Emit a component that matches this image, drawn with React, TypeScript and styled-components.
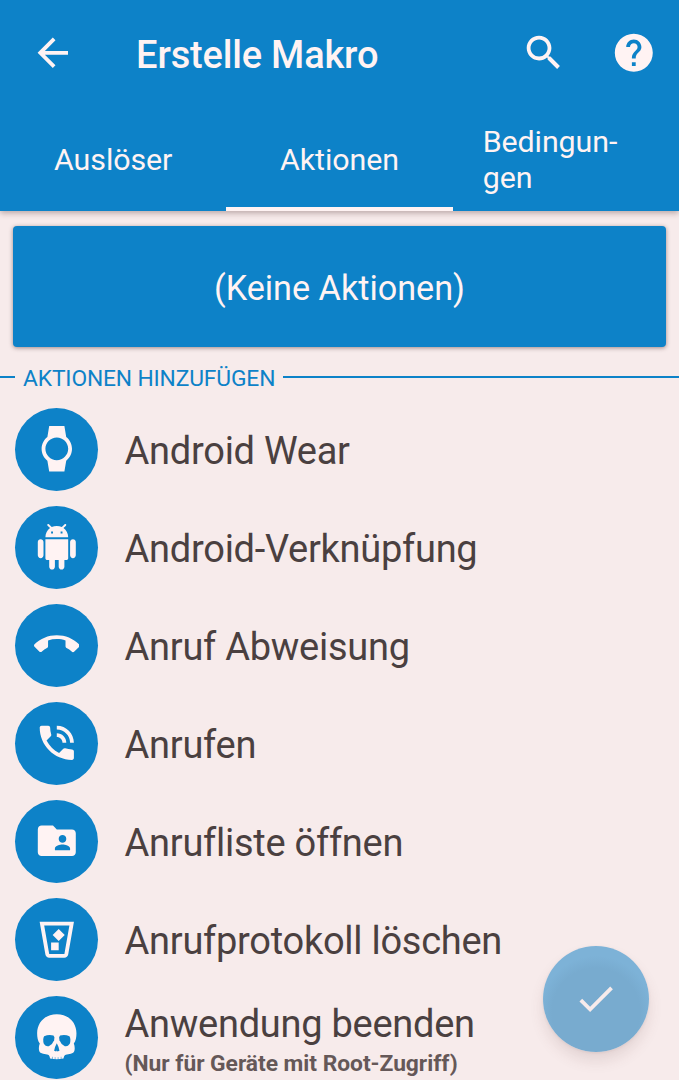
import React from "react";
import styled, { createGlobalStyle } from "styled-components";

const BLUE = "#0d82c8";
const PAPER = "#f7ebeb";
const LIGHT = "#fff3f3";

const GlobalStyle = createGlobalStyle`
  * { box-sizing: border-box; }
  html, body { margin: 0; padding: 0; background: ${PAPER}; }
  body { font-family: Roboto, "Liberation Sans", sans-serif; }
`;

const Screen = styled.div`
  position: relative;
  display: flex;
  flex-direction: column;
  width: 679px;
  height: 1080px;
  overflow: hidden;
  background: ${PAPER};
`;

const Header = styled.header`
  display: flex;
  flex-direction: column;
  height: 211px;
  flex: none;
  background: ${BLUE};
  color: ${LIGHT};
  box-shadow: 0 2px 6px rgba(70, 40, 40, 0.36);
`;

const Toolbar = styled.div`
  display: flex;
  align-items: center;
  height: 106px;
  padding: 0 22.5px 0 30px;
`;

const Title = styled.h1`
  flex: 1;
  margin: 0 0 0 60.5px;
  padding-top: 3px;
  font-size: 38px;
  font-weight: 500;
  letter-spacing: -0.18px;
  line-height: 46px;
  white-space: nowrap;
`;

const IconButton = styled.button`
  display: flex;
  padding: 0;
  margin: 0 0 0 ${(p: { $gap?: number }) => p.$gap ?? 0}px;
  border: 0;
  background: none;
  color: inherit;
`;

const Glyph = styled.svg`
  display: block;
  width: 45.6px;
  height: 45.6px;
  fill: currentColor;
`;

const Tabs = styled.nav`
  display: grid;
  grid-template-columns: repeat(3, 1fr);
  height: 105px;
`;

const Tab = styled.div<{ $active?: boolean; $start?: boolean }>`
  display: flex;
  align-items: center;
  justify-content: ${(p) => (p.$start ? "flex-start" : "center")};
  padding: 6px 30px 0;
  border-bottom: 4px solid ${(p) => (p.$active ? LIGHT : "transparent")};
  font-size: 30.4px;
  letter-spacing: -0.08px;
  line-height: 35.6px;
`;

const EmptyCard = styled.section`
  display: flex;
  flex: none;
  align-items: center;
  justify-content: center;
  height: 121px;
  margin: 15px 13px 0;
  padding-top: 2px;
  border-radius: 4px;
  background: ${BLUE};
  color: ${LIGHT};
  font-size: 34.2px;
  box-shadow: 0 1px 4px rgba(70, 40, 40, 0.5);
`;

const SectionHeading = styled.h2`
  display: flex;
  flex: none;
  align-items: center;
  gap: 8px;
  height: 46px;
  margin: 7px 0 0;
  color: ${BLUE};
  font-size: 22.8px;
  font-weight: 400;
  letter-spacing: -0.15px;
  white-space: nowrap;
  &::before, &::after {
    content: "";
    width: 15px;
    height: 2px;
    background: ${BLUE};
  }
  &::after { flex: 1; }
`;

const SectionLabel = styled.span`
  padding-top: 2px;
`;

const List = styled.ul`
  flex: none;
  margin: 0;
  padding: 0;
  list-style: none;
`;

const Row = styled.li`
  display: flex;
  align-items: center;
  height: 98px;
  padding-left: 15px;
`;

const Badge = styled.span`
  display: flex;
  flex: none;
  align-items: center;
  justify-content: center;
  width: 83px;
  height: 83px;
  border-radius: 50%;
  background: ${BLUE};
  color: ${LIGHT};
`;

const Labels = styled.div<{ $noted: boolean }>`
  display: flex;
  flex-direction: column;
  margin-left: 26.6px;
  padding-top: ${(p) => (p.$noted ? 8 : 5)}px;
  white-space: nowrap;
`;

const Name = styled.span`
  color: #4a4040;
  font-size: 38px;
  letter-spacing: -0.27px;
  line-height: 45px;
`;

const Note = styled.span`
  color: #655858;
  font-size: 22.8px;
  font-weight: 700;
  letter-spacing: -0.03px;
  line-height: 33px;
`;

const Fab = styled.button`
  position: absolute;
  left: 543px;
  top: 946px;
  display: flex;
  align-items: center;
  justify-content: center;
  width: 106px;
  height: 106px;
  padding: 0;
  border: 0;
  border-radius: 50%;
  background: radial-gradient(circle at 53px 66px, #78abcf 0 44px, #7db2d7 56px);
  color: ${PAPER};
  box-shadow: 0 9px 14px rgba(110, 70, 70, 0.13), 0 1px 3px rgba(110, 70, 70, 0.1);
`;

const paths = {
  back: "M20 11H7.83l5.59-5.59L12 4l-8 8 8 8 1.41-1.41L7.83 13H20v-2z",
  search:
    "M15.5 14h-.79l-.28-.27C15.41 12.59 16 11.11 16 9.5 16 5.91 13.09 3 9.5 3S3 5.91 3 9.5 5.91 16 9.5 16c1.61 0 3.09-.59 4.23-1.57l.27.28v.79l5 4.99L20.49 19l-4.99-5zm-6 0C7.01 14 5 11.99 5 9.5S7.01 5 9.5 5 14 7.01 14 9.5 11.99 14 9.5 14z",
  help: "M12 2C6.48 2 2 6.48 2 12s4.48 10 10 10 10-4.48 10-10S17.52 2 12 2zm1 17h-2v-2h2v2zm2.07-7.75l-.9.92C13.45 12.9 13 13.5 13 15h-2v-.5c0-1.1.45-2.1 1.17-2.83l1.24-1.26c.37-.36.59-.86.59-1.41 0-1.1-.9-2-2-2s-2 .9-2 2H8c0-2.21 1.79-4 4-4s4 1.79 4 4c0 .88-.36 1.68-.93 2.25z",
  check: "M9 16.17L4.83 12l-1.42 1.41L9 19 21 7l-1.41-1.41z",
  watch:
    "M20 12c0-2.54-1.19-4.81-3.04-6.27L16 0H8l-.95 5.73C5.19 7.19 4 9.45 4 12s1.19 4.81 3.05 6.27L8 24h8l.96-5.73C18.81 16.81 20 14.54 20 12zM6 12c0-3.31 2.69-6 6-6s6 2.69 6 6-2.69 6-6 6-6-2.69-6-6z",
  android:
    "M6 18c0 .55.45 1 1 1h1v3.5c0 .83.67 1.5 1.5 1.5s1.5-.67 1.5-1.5V19h2v3.5c0 .83.67 1.5 1.5 1.5s1.5-.67 1.5-1.5V19h1c.55 0 1-.45 1-1V8H6v10zM3.5 8C2.67 8 2 8.67 2 9.5v7c0 .83.67 1.5 1.5 1.5S5 17.33 5 16.5v-7C5 8.67 4.33 8 3.5 8zm17 0c-.83 0-1.5.67-1.5 1.5v7c0 .83.67 1.5 1.5 1.5s1.5-.67 1.5-1.5v-7c0-.83-.67-1.5-1.5-1.5zm-4.97-5.84l1.3-1.3c.2-.2.2-.51 0-.71-.2-.2-.51-.2-.71 0l-1.48 1.48C13.85 1.23 12.95 1 12 1c-.96 0-1.86.23-2.66.63L7.85.15c-.2-.2-.51-.2-.71 0-.2.2-.2.51 0 .71l1.31 1.31C6.97 3.26 6 5.01 6 7h12c0-1.99-.97-3.75-2.47-4.84zM10 5H9V4h1v1zm5 0h-1V4h1v1z",
  hangUp:
    "M12 9c-1.6 0-3.15.25-4.6.72v3.1c0 .39-.23.74-.56.9-.98.49-1.87 1.12-2.66 1.85-.18.18-.43.28-.7.28-.28 0-.53-.11-.71-.29L.29 13.08c-.18-.17-.29-.42-.29-.7 0-.28.11-.53.29-.71C3.34 8.78 7.46 7 12 7s8.66 1.78 11.71 4.67c.18.18.29.43.29.71 0 .28-.11.53-.29.71l-2.48 2.48c-.18.18-.43.29-.71.29-.27 0-.52-.11-.7-.28-.79-.74-1.69-1.36-2.67-1.85-.33-.16-.56-.5-.56-.9v-3.1C15.15 9.25 13.6 9 12 9z",
  talk: "M20 15.5c-1.25 0-2.45-.2-3.57-.57-.35-.11-.74-.03-1.02.24l-2.2 2.2c-2.83-1.44-5.15-3.75-6.59-6.59l2.2-2.21c.28-.26.36-.65.25-1C8.7 6.45 8.5 5.25 8.5 4c0-.55-.45-1-1-1H4c-.55 0-1 .45-1 1 0 9.39 7.61 17 17 17 .55 0 1-.45 1-1v-3.5c0-.55-.45-1-1-1zM19 12h2c0-4.97-4.03-9-9-9v2c3.87 0 7 3.13 7 7zm-4 0h2c0-2.76-2.24-5-5-5v2c1.66 0 3 1.34 3 3z",
  folder:
    "M20 6h-8l-2-2H4c-1.1 0-1.99.9-1.99 2L2 18c0 1.1.9 2 2 2h16c1.1 0 2-.9 2-2V8c0-1.1-.9-2-2-2zm-5 3c1.1 0 2 .9 2 2s-.9 2-2 2-2-.9-2-2 .9-2 2-2zm4 8h-8v-1c0-1.33 2.67-2 4-2s4 .67 4 2v1z",
  bin: "M21.03 3L18 20.31C17.83 21.27 17 22 16 22H8C7 22 6.17 21.27 6 20.31L2.97 3H21.03M5.36 5L8 20H16L18.64 5H5.36M9 18V14H13V18H9M13 13.18L9.82 10L13 6.82L16.18 10L13 13.18Z",
};

const Icon = ({ d }: { d: string }) => (
  <Glyph viewBox="0 0 24 24">
    <path d={d} />
  </Glyph>
);

const Skull = () => (
  <Glyph viewBox="101.6 78.6 136.8 136.8">
    <path d="M170 79C135 79 111 104 111 136C111 149 113 159 119 167C115 177 115 190 121 195C131 200 145 198 148 205L150 212Q170 216 190 212L192 205C197 198 211 200 219 195C225 190 225 177 221 167C227 159 229 149 229 136C229 104 205 79 170 79Z" />
    <g fill={BLUE}>
      <path d="M132 145Q146 139 160 143Q165 147 162 157Q157 170 146 175Q138 178 131 168Q127 153 132 145Z" />
      <path d="M208 145Q194 139 180 143Q175 147 178 157Q183 170 194 175Q202 178 209 168Q213 153 208 145Z" />
      <path d="M170 166Q164 176 162 189L168 191L170 188L172 191L178 189Q176 176 170 166Z" />
    </g>
    <path d="M157 207V216M165 208V217M174 208V217M183 207V216" stroke={BLUE} strokeWidth="1.5" fill="none" />
  </Glyph>
);

const actions: { name: string; note?: string; icon: React.ReactNode }[] = [
  { name: "Android Wear", icon: <Icon d={paths.watch} /> },
  { name: "Android-Verknüpfung", icon: <Icon d={paths.android} /> },
  { name: "Anruf Abweisung", icon: <Icon d={paths.hangUp} /> },
  { name: "Anrufen", icon: <Icon d={paths.talk} /> },
  { name: "Anrufliste öffnen", icon: <Icon d={paths.folder} /> },
  { name: "Anrufprotokoll löschen", icon: <Icon d={paths.bin} /> },
  { name: "Anwendung beenden", note: "(Nur für Geräte mit Root-Zugriff)", icon: <Skull /> },
];

export default function App() {
  return (
    <Screen>
      <GlobalStyle />
      <Header>
        <Toolbar>
          <IconButton aria-label="Zurück">
            <Icon d={paths.back} />
          </IconButton>
          <Title>Erstelle Makro</Title>
          <IconButton aria-label="Suchen">
            <Icon d={paths.search} />
          </IconButton>
          <IconButton aria-label="Hilfe" $gap={44.4}>
            <Icon d={paths.help} />
          </IconButton>
        </Toolbar>
        <Tabs>
          <Tab>Auslöser</Tab>
          <Tab $active>Aktionen</Tab>
          <Tab $start>
            <span>
              Bedingun-
              <br />
              gen
            </span>
          </Tab>
        </Tabs>
      </Header>
      <EmptyCard>(Keine Aktionen)</EmptyCard>
      <SectionHeading>
        <SectionLabel>AKTIONEN HINZUFÜGEN</SectionLabel>
      </SectionHeading>
      <List>
        {actions.map((a) => (
          <Row key={a.name}>
            <Badge>{a.icon}</Badge>
            <Labels $noted={Boolean(a.note)}>
              <Name>{a.name}</Name>
              {a.note && <Note>{a.note}</Note>}
            </Labels>
          </Row>
        ))}
      </List>
      <Fab aria-label="Fertig">
        <Icon d={paths.check} />
      </Fab>
    </Screen>
  );
}
